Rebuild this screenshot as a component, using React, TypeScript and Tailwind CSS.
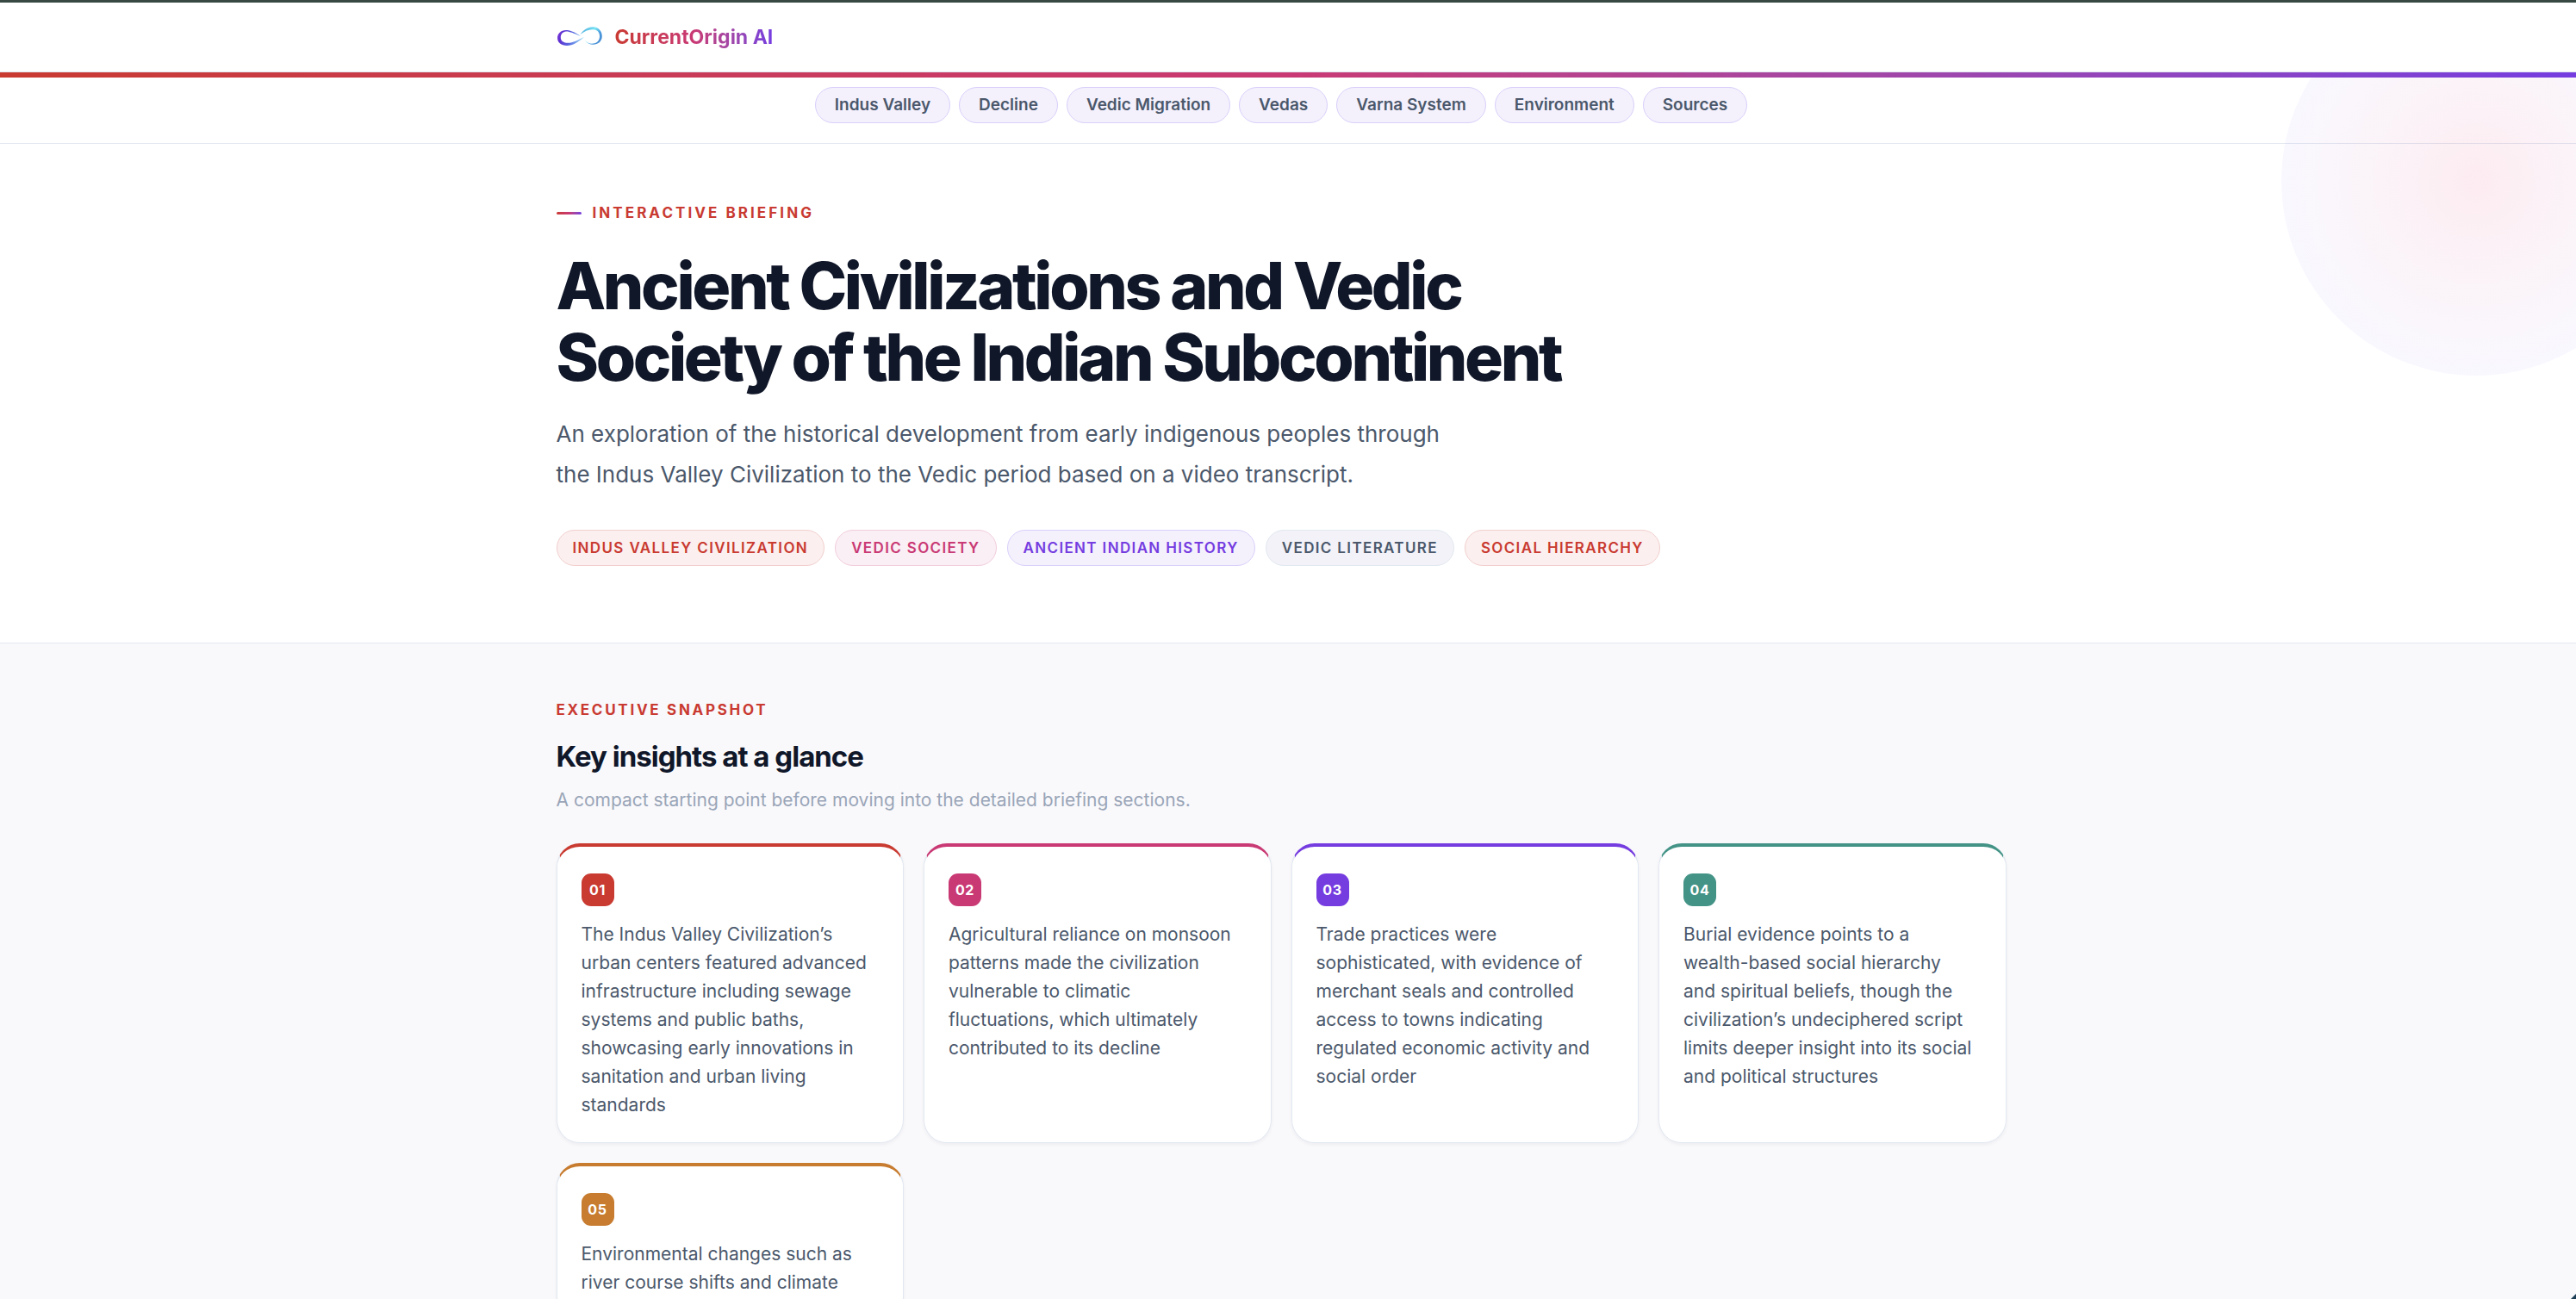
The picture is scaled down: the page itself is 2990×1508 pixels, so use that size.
import clsx from "clsx";

const navLinks = [
  { label: "Indus Valley", href: "#indus-valley" },
  { label: "Decline", href: "#decline" },
  { label: "Vedic Migration", href: "#vedic-migration" },
  { label: "Vedas", href: "#vedas" },
  { label: "Varna System", href: "#varna-system" },
  { label: "Environment", href: "#environment" },
  { label: "Sources", href: "#sources" },
];

const tags = [
  { label: "Indus Valley Civilization", style: "text-[#c93a31] bg-[#fbf0ef] border-[#f2cfce]" },
  { label: "Vedic Society", style: "text-[#c93974] bg-[#faeff4] border-[#f2cddc]" },
  { label: "Ancient Indian History", style: "text-[#753ce0] bg-[#f4f1fd] border-[#dacffa]" },
  { label: "Vedic Literature", style: "text-[#4b586b] bg-[#f2f2f8] border-slate-200" },
  { label: "Social Hierarchy", style: "text-[#c93a31] bg-[#fbf0ef] border-[#f2cfce]" },
];

const insights = [
  {
    text: "The Indus Valley Civilization’s urban centers featured advanced infrastructure including sewage systems and public baths, showcasing early innovations in sanitation and urban living standards",
    border: "border-t-[#c93a31]",
    badge: "bg-[#c93a31]",
  },
  {
    text: "Agricultural reliance on monsoon patterns made the civilization vulnerable to climatic fluctuations, which ultimately contributed to its decline",
    border: "border-t-[#c93974]",
    badge: "bg-[#c93974]",
  },
  {
    text: "Trade practices were sophisticated, with evidence of merchant seals and controlled access to towns indicating regulated economic activity and social order",
    border: "border-t-[#753ce0]",
    badge: "bg-[#753ce0]",
  },
  {
    text: "Burial evidence points to a wealth-based social hierarchy and spiritual beliefs, though the civilization’s undeciphered script limits deeper insight into its social and political structures",
    border: "border-t-[#449387]",
    badge: "bg-[#449387]",
  },
  {
    text: "Environmental changes such as river course shifts and climate",
    border: "border-t-[#c77c2f]",
    badge: "bg-[#c77c2f]",
  },
];

const Logo = () => (
  <svg viewBox="0 0 54 24" className="w-[54px] h-6" aria-hidden="true">
    <defs>
      <linearGradient id="loop-left" x1="0" y1="0" x2="1" y2="0.2">
        <stop offset="0" stopColor="#8a3fe0" />
        <stop offset="0.2" stopColor="#5f2fd0" />
        <stop offset="0.6" stopColor="#5a6be2" />
        <stop offset="1" stopColor="#8fd0f2" />
      </linearGradient>
      <linearGradient id="loop-right" x1="0" y1="0" x2="1" y2="0.6">
        <stop offset="0" stopColor="#4a9fd8" />
        <stop offset="0.55" stopColor="#78e6f4" />
        <stop offset="0.8" stopColor="#4a9ade" />
        <stop offset="1" stopColor="#4a8fd4" />
      </linearGradient>
    </defs>
    <path
      fill="url(#loop-left)"
      d="M28 11C20 5.500 15 4 11 4C5 4 1 8 1 13C1 18.500 5.500 22 12 22C19 22 25 18 32 12C25 15.500 19 18.800 13.500 18.800C8 18.800 4.800 16.500 4.800 12.500C4.800 8.500 7.500 5.800 11 5.500C15 5.300 20 7.800 28 11Z"
    />
    <path
      fill="url(#loop-right)"
      d="M27.500 9C31 4 36 0.200 42 0.200C48.500 0.200 52.800 5 52.800 11C52.800 17 48 20.800 42.500 20.800C38.500 20.800 35.500 19 32.500 16C36 18.800 39 20 42.500 19.600C47 19 50 16 50 11C50 6 47 3.200 42 3.200C37 3.200 32 5.500 27.500 9Z"
    />
  </svg>
);

const Container = ({ className, children }: { className?: string; children: React.ReactNode }) => (
  <div className="pr-4">
    <div className={clsx("mx-auto w-full max-w-[1683px]", className)}>{children}</div>
  </div>
);

const Header = () => (
  <header className="relative z-10 bg-white">
    <div className="h-[3px] bg-[#384943]" />
    <Container className="flex h-20 items-center">
      <a href="#top" className="flex items-center gap-[14px]">
        <Logo />
        <span className="bg-linear-to-r from-[#c93a31] via-[#c93974] to-[#753ce0] bg-clip-text text-[23px] leading-7 font-bold text-transparent">
          CurrentOrigin AI
        </span>
      </a>
    </Container>
    <div className="h-[7px] border-t border-slate-200 bg-linear-to-r from-[#c93a31] via-[#c93974] to-[#753ce0]" />
  </header>
);

const SectionNav = () => (
  <nav className="border-b border-slate-200 pt-[11px] pb-[23px]">
    <Container className="flex flex-wrap justify-center gap-[10px]">
      {navLinks.map((link) => (
        <a
          key={link.href}
          href={link.href}
          className="rounded-full border border-[#dacffa] bg-[#f4f1fd] px-[22px] py-[7px] text-[19px] leading-[26px] font-semibold text-[#4b586b]"
        >
          {link.label}
        </a>
      ))}
    </Container>
  </nav>
);

const Hero = () => (
  <section id="top" className="border-b border-slate-200 pt-[70px] pb-[89px]">
    <Container>
      <p className="flex items-center gap-[13px] text-[17px] leading-5 font-bold tracking-[0.18em] text-[#c93a31] uppercase">
        <span className="h-[3px] w-[29px] rounded-full bg-linear-to-r from-[#c93a31] via-[#c93974] to-[#753ce0]" />
        Interactive Briefing
      </p>
      <h1 className="mt-[33px] max-w-[1280px] text-[75px] leading-[83px] font-extrabold tracking-[-0.045em] text-[#101729]">
        Ancient Civilizations and Vedic Society of the Indian Subcontinent
      </h1>
      <p className="mt-6 max-w-[1060px] text-[26px] leading-[47px] text-[#4b586b]">
        An exploration of the historical development from early indigenous peoples through the Indus
        Valley Civilization to the Vedic period based on a video transcript.
      </p>
      <ul className="mt-[41px] flex flex-wrap gap-3">
        {tags.map((tag) => (
          <li
            key={tag.label}
            className={clsx(
              "rounded-full border px-[18px] py-[9px] text-[17px] leading-[22px] font-semibold tracking-[0.08em] uppercase",
              tag.style
            )}
          >
            {tag.label}
          </li>
        ))}
      </ul>
    </Container>
  </section>
);

const Snapshot = () => (
  <section className="pt-[67px] pb-20">
    <Container>
      <p className="text-[17px] leading-5 font-bold tracking-[0.16em] text-[#c93a31] uppercase">
        Executive Snapshot
      </p>
      <h2 className="mt-[25px] text-[33px] leading-[38px] font-bold tracking-[-0.03em] text-[#101729]">
        Key insights at a glance
      </h2>
      <p className="mt-[15px] text-[21px] leading-[34px] text-[#99a5b7]">
        A compact starting point before moving into the detailed briefing sections.
      </p>
      <ol className="mt-[33px] grid grid-cols-4 gap-[23px]">
        {insights.map((insight, index) => (
          <li
            key={insight.badge}
            className={clsx(
              "rounded-[27px] border border-t-4 border-slate-200 bg-white pt-[31px] pr-[37px] pb-[27px] pl-7 shadow-[0_2px_4px_rgba(15,23,42,0.05)]",
              insight.border
            )}
          >
            <span
              className={clsx(
                "flex size-[38px] items-center justify-center rounded-[11px] text-base font-bold tracking-[0.04em] text-white",
                insight.badge
              )}
            >
              {String(index + 1).padStart(2, "0")}
            </span>
            <p className="mt-4 text-[21px] leading-[33px] text-[#4b586b]">{insight.text}</p>
          </li>
        ))}
      </ol>
    </Container>
  </section>
);

const App = () => (
  <div className="min-h-screen bg-[#f9f9fc] font-['Inter',sans-serif]">
    <Header />
    <div className="relative overflow-hidden bg-white">
      <SectionNav />
      <Hero />
      <div className="pointer-events-none absolute -top-[106px] -right-[110px] size-[452px] rounded-full bg-radial from-[rgba(230,40,100,0.09)] to-[rgba(110,70,240,0.04)] to-70%" />
    </div>
    <Snapshot />
    <svg viewBox="0 0 6 6" className="fixed right-0 bottom-0 size-[6px]" aria-hidden="true">
      <path d="M6 0V6H0Z" fill="#1d3f57" />
    </svg>
  </div>
);

export default App;
